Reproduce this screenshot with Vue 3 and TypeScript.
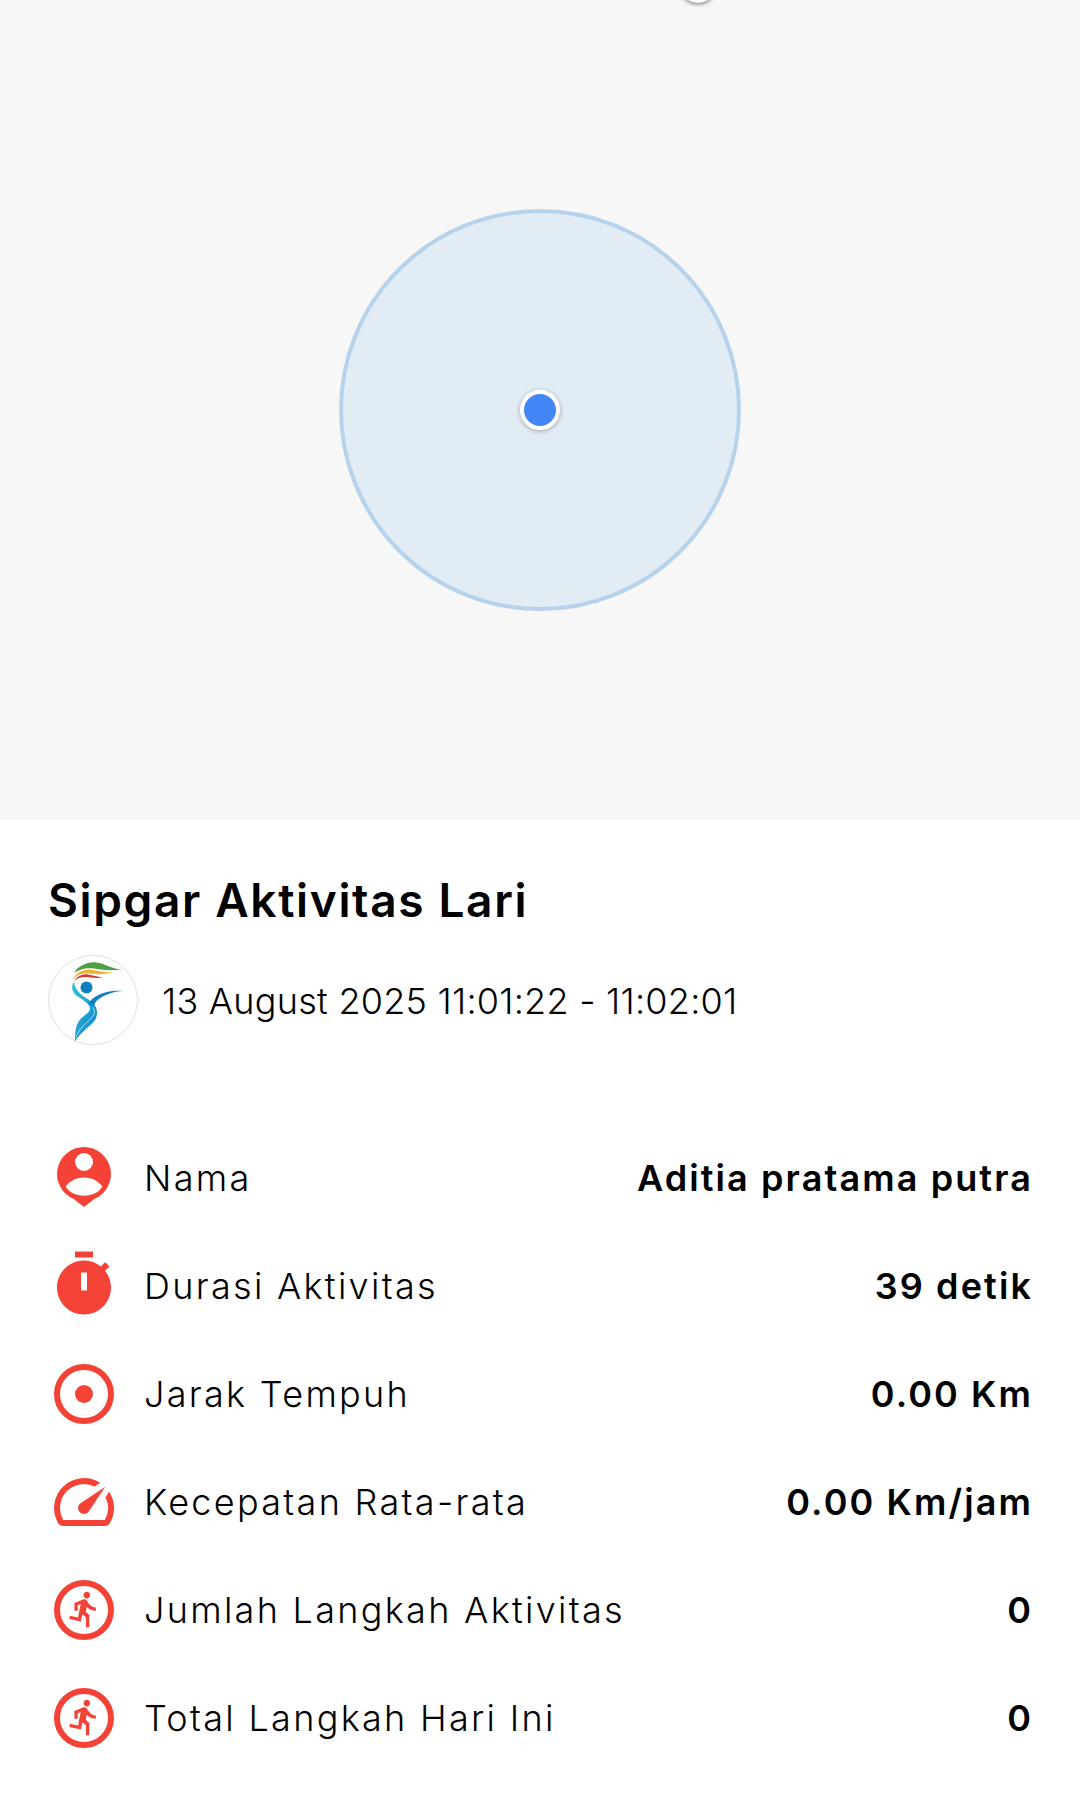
<template>
  <div class="page">
    <div class="map">
      <div class="other-marker"></div>
      <div class="accuracy">
        <div class="location-dot"></div>
      </div>
    </div>

    <div class="sheet">
      <h1 class="title">Sipgar Aktivitas Lari</h1>
      <div class="session">
        <svg class="logo" viewBox="8 9.5 90 90">
          <defs>
            <linearGradient id="bodyGrad" x1="0" y1="0" x2="1" y2="1">
              <stop offset="0" stop-color="#2fc1d8" />
              <stop offset="0.6" stop-color="#1b9cd0" />
              <stop offset="1" stop-color="#0f7fc0" />
            </linearGradient>
          </defs>
          <circle cx="53" cy="54.5" r="44.5" fill="#fff" stroke="#d8d8d8" stroke-width="0.8" />
          <path d="M34 28C38 20 48 16 56 17C66 18 72 24 83 24C72 25 64 25 54 23C46 22 38 24 34 28Z" fill="#4ea045" />
          <path d="M33 34C35 28 42 24 50 24C58 25 64 27 73 27C65 29 56 29 50 28C43 27 37 29 33 34Z" fill="#f0b232" />
          <path d="M34 36C37 31 42 28 48 29C53 30 57 31 63 32C56 33 50 32 46 31.5C41 31 37 33 34 36Z" fill="#d8392f" />
          <circle cx="46.5" cy="42" r="6" fill="#0f7fc0" />
          <path d="M34 36C30 42 33 48 38 51C44 55 50 59 50 63C50 68 42 70 38 77C35 83 35 90 35 96C40 88 48 82 53 77C58 72 58 65 55 60C50 54 44 52 40 48C36 44 34 40 34 36Z" fill="url(#bodyGrad)" />
          <path d="M48 58C54 50 66 44 83 45.5C72 46 62 50 56 56L54 60Z" fill="#0f7fc0" />
          <path d="M36 92C38 84 46 78 52 72C55 69 55 65 53 62" fill="none" stroke="#fff" stroke-width="0.6" />
        </svg>
        <span class="session-time">13 August 2025 11:01:22 - 11:02:01</span>
      </div>

      <div class="rows">
        <div v-for="row in rows" :key="row.label" class="row">
          <svg class="row-icon" viewBox="0 0 24 24">
            <template v-if="row.icon === 'person'">
              <path
                fill-rule="evenodd"
                d="M12 1.67a9 9 0 0 1 3.4 17.33L12 21.7 8.6 19A9 9 0 0 1 12 1.67zM12 3.67a3 3 0 1 0 0 6 3 3 0 0 0 0-6zM12 11.8c-2.8 0-5 1.4-6.1 3.05C7 16.8 9.2 17.9 12 17.9s5-1.1 6.1-3.05C17 13.2 14.8 11.8 12 11.8z"
              />
            </template>
            <path
              v-else-if="row.icon === 'timer'"
              transform="translate(0 -0.5)"
              d="M15 1H9v2h6V1zm4.03 6.39l1.42-1.42c-.43-.51-.9-.99-1.41-1.41l-1.42 1.42C16.07 4.74 14.12 4 12 4c-4.97 0-9 4.03-9 9s4.02 9 9 9 9-4.03 9-9c0-2.12-.74-4.07-1.97-5.61zM13 14h-2V8h2v6z"
            />
            <template v-else-if="row.icon === 'distance'">
              <circle cx="12" cy="12" r="9" class="ring" />
              <circle cx="12" cy="12" r="3" />
            </template>
            <path
              v-else-if="row.icon === 'speed'"
              d="M20.38 8.57l-1.23 1.85a8 8 0 0 1-.22 7.58H5.07A8 8 0 0 1 15.58 6.85l1.85-1.23A10 10 0 0 0 3.35 19a2 2 0 0 0 1.72 1h13.85a2 2 0 0 0 1.74-1 10 10 0 0 0-.27-10.44zm-9.79 6.84a2 2 0 0 0 2.83 0l5.66-8.49-8.49 5.66a2 2 0 0 0 0 2.83z"
            />
            <template v-else>
              <circle cx="12" cy="12" r="9" class="ring" />
              <path
                transform="translate(12 12) scale(.55) translate(-11.8 -12.48)"
                d="M13.49 5.48c1.1 0 2-.9 2-2s-.9-2-2-2-2 .9-2 2 .9 2 2 2zm-3.6 13.9l1-4.4 2.1 2v6h2v-7.5l-2.1-2 .6-3c1.3 1.5 3.3 2.5 5.5 2.5v-2c-1.9 0-3.5-1-4.3-2.4l-1-1.6c-.4-.6-1-1-1.7-1-.3 0-.5.1-.8.1l-5.2 2.2v4.7h2v-3.4l1.8-.7-1.6 8.1-4.9-1-.4 2 7 1.4z"
              />
            </template>
          </svg>
          <span class="row-label">{{ row.label }}</span>
          <span class="row-value">{{ row.value }}</span>
        </div>
      </div>
    </div>
  </div>
</template>

<script setup lang="ts">
interface StatRow {
  icon: "person" | "timer" | "distance" | "speed" | "run";
  label: string;
  value: string;
}

const rows: StatRow[] = [
  { icon: "person", label: "Nama", value: "Aditia pratama putra" },
  { icon: "timer", label: "Durasi Aktivitas", value: "39 detik" },
  { icon: "distance", label: "Jarak Tempuh", value: "0.00 Km" },
  { icon: "speed", label: "Kecepatan Rata-rata", value: "0.00 Km/jam" },
  { icon: "run", label: "Jumlah Langkah Aktivitas", value: "0" },
  { icon: "run", label: "Total Langkah Hari Ini", value: "0" },
];
</script>

<style>
html,
body {
  background: #fff;
}
</style>

<style scoped>
.page {
  width: 1080px;
  height: 1800px;
  overflow: hidden;
  background: #fff;
  color: #000;
  font-family: Inter, "Open Sans", sans-serif;
}

.map {
  position: relative;
  height: 820px;
  background: #f7f7f7;
  display: flex;
  align-items: center;
  justify-content: center;
}

.other-marker {
  position: absolute;
  left: 680px;
  top: -33px;
  width: 36px;
  height: 36px;
  box-sizing: border-box;
  border: 4px solid #fff;
  border-radius: 50%;
  background: #8d8d8d;
  box-shadow: 0 1px 4px rgba(0, 0, 0, 0.55);
}

.accuracy {
  position: relative;
  width: 402px;
  height: 402px;
  box-sizing: border-box;
  border: 4px solid #b7d3ec;
  border-radius: 50%;
  background: #e2ecf5;
  display: flex;
  align-items: center;
  justify-content: center;
}

.location-dot {
  width: 40px;
  height: 40px;
  box-sizing: border-box;
  border: 4px solid #fff;
  border-radius: 50%;
  background: #4285f4;
  box-shadow: 0 1px 5px rgba(0, 0, 0, 0.3);
}

.sheet {
  padding: 0 48px;
}

.title {
  margin: 52px 0 0;
  font-size: 46px;
  line-height: 56px;
  font-weight: 600;
  letter-spacing: 1.65px;
}

.session {
  display: flex;
  align-items: center;
  gap: 24px;
  margin-top: 27px;
}

.logo {
  width: 90px;
  height: 90px;
  flex: none;
}

.session-time {
  position: relative;
  top: 1px;
  font-size: 36px;
  font-weight: 300;
  letter-spacing: 0.25px;
}

.rows {
  margin-top: 79px;
  display: flex;
  flex-direction: column;
}

.row {
  display: flex;
  align-items: center;
  height: 108px;
}

.row-icon {
  width: 72px;
  height: 72px;
  flex: none;
  fill: #f44336;
}

.ring {
  fill: none;
  stroke: #f44336;
  stroke-width: 2;
}

.row-label {
  margin-left: 24px;
  font-size: 36px;
  font-weight: 300;
  letter-spacing: 2.3px;
}

.row-value {
  margin-left: auto;
  font-size: 36px;
  font-weight: 600;
  letter-spacing: 2.1px;
  margin-right: -1px;
}
</style>
